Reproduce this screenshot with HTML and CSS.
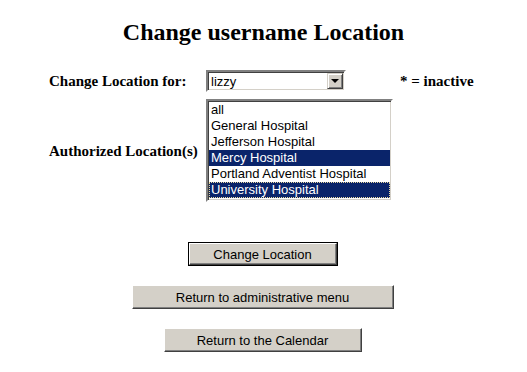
FILE: index.html
```html
<!DOCTYPE html>
<html lang="en">
<head>
    <meta charset="UTF-8">
    <title>Change username Location</title>
    <link rel="stylesheet" href="styles.css">
</head>
<body>
    <h1 class="title">Change username Location</h1>

    <form class="location-form">
        <div class="row">
            <span class="label">Change Location for:</span>
            <div class="dropdown">
                <span class="dropdown-value">lizzy</span>
                <span class="dropdown-arrow"></span>
            </div>
            <span class="note">* = inactive</span>
        </div>

        <div class="row">
            <span class="label">Authorized Location(s)</span>
            <div class="listbox">
                <div class="option">all</div>
                <div class="option">General Hospital</div>
                <div class="option">Jefferson Hospital</div>
                <div class="option selected">Mercy Hospital</div>
                <div class="option">Portland Adventist Hospital</div>
                <div class="option selected focused">University Hospital</div>
            </div>
        </div>

        <div class="actions">
            <div class="btn-default"><button type="button" class="btn btn-change">Change Location</button></div>
            <button type="button" class="btn btn-admin">Return to administrative menu</button>
            <button type="button" class="btn btn-calendar">Return to the Calendar</button>
        </div>
    </form>
</body>
</html>
```

FILE: styles.css
```css
body {
    margin: 0;
    background-color: #fff;
    font-family: 'Liberation Serif', 'Times New Roman', serif;
    color: #000;
}

.title {
    margin: 18px 0 0;
    font-size: 24px;
    line-height: 28px;
    font-weight: bold;
    text-align: center;
}

.location-form {
    margin: 24px 0 0;
}

.row {
    display: flex;
    align-items: center;
    padding-left: 49px;
    margin-bottom: 7px;
}

.label {
    width: 157px;
    font-size: 15px;
    font-weight: bold;
    line-height: 22px;
    white-space: nowrap;
}

.note {
    margin-left: 54px;
    font-size: 15px;
    font-weight: bold;
    white-space: nowrap;
}

.dropdown {
    display: flex;
    align-items: center;
    box-sizing: border-box;
    width: 140px;
    height: 22px;
    border: 2px solid;
    border-color: #808080 #fff #fff #808080;
    box-shadow: inset 1px 1px 0 #404040, inset -1px -1px 0 #d4d0c8;
    background-color: #fff;
    font-family: 'Liberation Sans', Arial, sans-serif;
    font-size: 13px;
}

.dropdown-value {
    flex: 1;
    padding-left: 3px;
}

.dropdown-arrow {
    position: relative;
    box-sizing: border-box;
    width: 16px;
    height: 16px;
    margin-right: 1px;
    background-color: #d4d0c8;
    border: 1px solid;
    border-color: #d4d0c8 #404040 #404040 #d4d0c8;
    box-shadow: inset 1px 1px 0 #fff, inset -1px -1px 0 #808080;
}

.dropdown-arrow::after {
    content: "";
    position: absolute;
    left: 3px;
    top: 5px;
    border-left: 4px solid transparent;
    border-right: 4px solid transparent;
    border-top: 4px solid #000;
}

.listbox {
    box-sizing: border-box;
    width: 187px;
    padding: 1px 0 2px;
    border: 2px solid;
    border-color: #808080 #fff #fff #808080;
    box-shadow: inset 1px 1px 0 #404040, inset -1px -1px 0 #d4d0c8;
    background-color: #fff;
    font-family: 'Liberation Sans', Arial, sans-serif;
    font-size: 13px;
}

.option {
    box-sizing: border-box;
    height: 16px;
    line-height: 16px;
    padding-left: 2px;
    margin: 0 1px;
    white-space: nowrap;
}

.option.selected {
    background-color: #0a246a;
    color: #fff;
}

.option.focused {
    outline: 1px dotted #e8d8a0;
    outline-offset: -1px;
}

.actions {
    display: flex;
    flex-direction: column;
    align-items: center;
    gap: 19px;
    margin-top: 40px;
    margin-right: 2px;
}

.btn {
    box-sizing: border-box;
    height: 24px;
    padding: 0;
    background-color: #d4d0c8;
    border: 1px solid;
    border-color: #fff #404040 #404040 #fff;
    box-shadow: inset -1px -1px 0 #808080;
    font-family: 'Liberation Sans', Arial, sans-serif;
    font-size: 13px;
    color: #000;
}

.btn-default {
    border: 1px solid #000;
    height: 24px;
    box-sizing: border-box;
}

.btn-change {
    width: 148px;
    height: 22px;
    display: block;
}

.btn-admin {
    width: 262px;
}

.btn-calendar {
    width: 198px;
}
```
